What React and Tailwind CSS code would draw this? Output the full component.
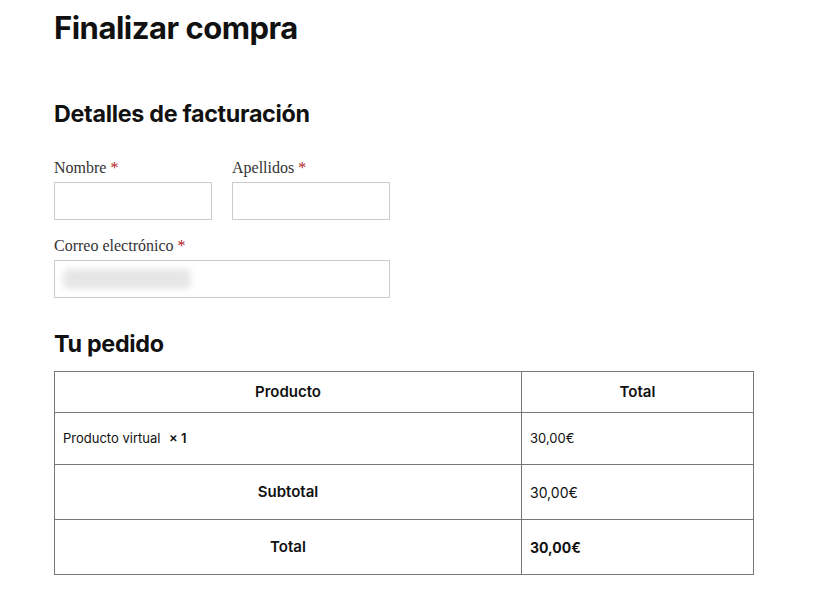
import React from 'react';

const sans = { fontFamily: 'Inter, "Noto Sans", sans-serif' };

function Field({ label, className = '', children }) {
  return (
    <div className={className}>
      <label className="block text-[16px] leading-[20px] text-[#333] mb-[4px] font-['Liberation_Serif',serif]">
        {label} <span className="text-[#b22222]">*</span>
      </label>
      <div className="h-[38px] border border-[#ccc] bg-white flex items-center">{children}</div>
    </div>
  );
}

export default function App() {
  return (
    <div className="min-h-screen bg-white text-[#111] px-[54px] pt-[10px] font-['Inter',sans-serif]">
      <h1 className="text-[31px] leading-[36px] font-bold tracking-[-0.5px]">Finalizar compra</h1>

      <h2 className="mt-[54px] text-[23.3px] leading-[28px] font-bold tracking-[-0.3px]">Detalles de facturación</h2>

      {/* Billing fields */}
      <div className="mt-[30px] w-[336px] flex flex-col gap-[16px]">
        <div className="flex gap-[20px]">
          <Field label="Nombre" className="w-[158px]" />
          <Field label="Apellidos" className="w-[158px]" />
        </div>
        <Field label="Correo electrónico">
          <div className="ml-[8px] h-[20px] w-[128px] rounded-md bg-[#e6e6e6] blur-[3px]" />
        </Field>
      </div>

      <h2 className="mt-[32px] text-[23.3px] leading-[28px] font-bold tracking-[-0.3px]">Tu pedido</h2>

      {/* Order table */}
      <table className="mt-[13px] w-[700px] border-collapse border border-[#777] text-[13px]" style={sans}>
        <thead>
          <tr className="h-[41px]">
            <th className="w-[467px] border border-[#777] font-semibold text-[15px] text-center">Producto</th>
            <th className="border border-[#777] font-semibold text-[15px] text-center">Total</th>
          </tr>
        </thead>
        <tbody>
          <tr className="h-[52px]">
            <td className="border border-[#777] px-[8px]">
              Producto virtual <strong className="ml-[5px] font-semibold">× 1</strong>
            </td>
            <td className="border border-[#777] px-[8px]">30,00€</td>
          </tr>
          <tr className="h-[55px]">
            <th className="border border-[#777] font-semibold text-[15px] text-center">Subtotal</th>
            <td className="border border-[#777] px-[8px] text-[14px]">30,00€</td>
          </tr>
          <tr className="h-[55px]">
            <th className="border border-[#777] font-semibold text-[15px] text-center">Total</th>
            <td className="border border-[#777] px-[8px] text-[14px] font-bold">30,00€</td>
          </tr>
        </tbody>
      </table>
    </div>
  );
}
